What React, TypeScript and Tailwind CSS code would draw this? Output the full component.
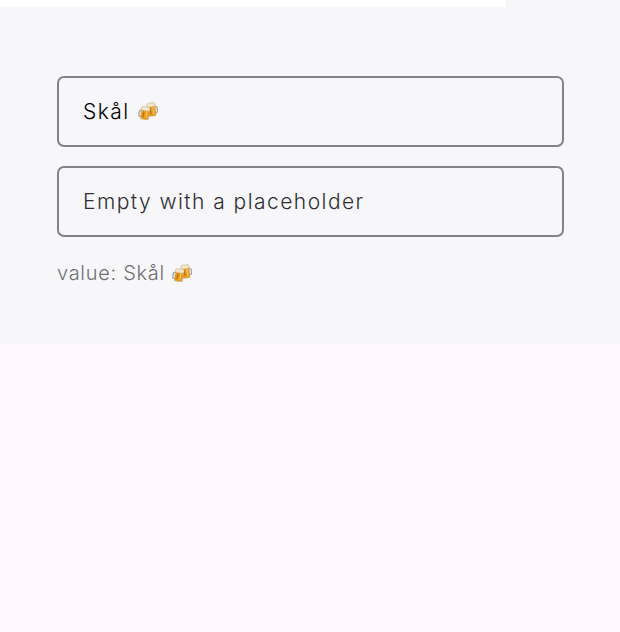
function Cheers({ className }: { className: string }) {
  return (
    <span className={`relative inline-block h-[18px] w-[20px] overflow-hidden text-[1px] text-transparent ${className}`}>
      🍻
      <svg viewBox="0 0 20 18" className="absolute inset-0 h-full w-full">
        {/* right mug */}
        <g transform="rotate(-8 14 8)">
          <path d="M17 5h1.2a1.2 1.2 0 0 1 1.2 1.2v3.6a1.2 1.2 0 0 1-1.2 1.2H17" fill="none" stroke="#a8a498" strokeWidth="1.3" />
          <rect x="10" y="3" width="7.400" height="11" rx="1.200" fill="#ee9a16" stroke="#b9ad90" strokeWidth="0.6" />
          <rect x="12" y="5.500" width="1" height="6.500" fill="#b9650c" />
          <rect x="14.800" y="5.500" width="1" height="6.500" fill="#fbd36a" />
          <rect x="9.600" y="0.800" width="8.200" height="4" rx="1.800" fill="#f3e6c8" stroke="#bfae86" strokeWidth="0.5" />
        </g>
        {/* left mug */}
        <g transform="rotate(8 7 12)">
          <path d="M3.400 9H2.200A1.200 1.200 0 0 0 1 10.200v3.600A1.200 1.200 0 0 0 2.200 15h1.200" fill="none" stroke="#a8a498" strokeWidth="1.3" />
          <rect x="3" y="7" width="8" height="10.400" rx="1.200" fill="#ee9a16" stroke="#b9ad90" strokeWidth="0.6" />
          <rect x="5" y="9.500" width="1" height="6" fill="#b9650c" />
          <rect x="8" y="9.500" width="1" height="6" fill="#fbd36a" />
          <rect x="2.600" y="4.800" width="8.800" height="4" rx="1.800" fill="#f3e6c8" stroke="#bfae86" strokeWidth="0.5" />
        </g>
      </svg>
    </span>
  );
}

export default function App() {
  return (
    <div className="min-h-[632px] bg-[#fff8ff] font-['Inter',sans-serif]">
      <div className="relative h-[344px] bg-[#f7f7f9] pl-[57px] pr-[56px] pt-[76px]">
        <div className="absolute left-0 top-0 h-[7px] w-[506px] bg-white" />
        <div className="flex flex-col gap-[19px]">
          <div
            role="textbox"
            className="flex h-[71px] w-full items-center rounded-[7px] border-2 border-[#838287] px-[24px] text-[21px] font-light tracking-[1.45px] text-[#000000]"
          >
            Skål
            <Cheers className="ml-[8px] -translate-y-[1px]" />
          </div>
          <input
            placeholder="Empty with a placeholder"
            className="h-[71px] w-full rounded-[7px] border-2 border-[#838287] bg-transparent px-[24px] text-[21px] font-light tracking-[1.45px] text-[#000000] outline-none placeholder:text-[#2f2f33]"
          />
        </div>
        <p className="mt-[21px] flex items-center text-[20px] font-light leading-[30px] tracking-[0.7px] text-[#6f6f74]">
          value: Skål
          <Cheers className="ml-[7px]" />
        </p>
      </div>
    </div>
  );
}
